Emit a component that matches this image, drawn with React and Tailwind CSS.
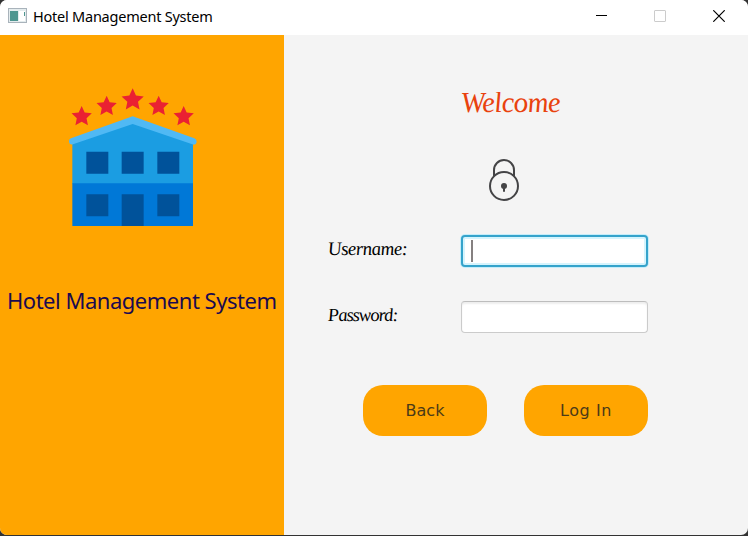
const starPoints = (cx, cy, r) =>
  Array.from({ length: 10 }, (_, i) => {
    const a = -Math.PI / 2 + (i * Math.PI) / 5;
    const d = i % 2 ? r * 0.48 : r;
    return `${(cx + d * Math.cos(a)).toFixed(1)},${(cy + d * Math.sin(a)).toFixed(1)}`;
  }).join(" ");

function HotelLogo() {
  return (
    <svg viewBox="0 0 480 465" className="h-[155px] w-[160px]">
      <path d="M52 185 L233 122 L414 185 V312 H52Z" fill="#1b9de2" />
      <path d="M52 310 H414 V438 H52Z" fill="#0078d7" />
      <path d="M42 184 Q42 177 48 175 L233 109 L418 175 Q425 177 425 185 Q423 196 412 193 L233 132 L54 193 Q43 196 42 184Z" fill="#50b9f4" />
      <path d="M94 215h66v66H94zM200 215h66v66h-66zM307 215h66v66h-66zM94 343h66v66H94zM307 343h66v66h-66zM200 343h66v95h-66z" fill="#00529a" />
      <g fill="#ea2132">
        <polygon points={starPoints(80, 110, 32)} />
        <polygon points={starPoints(155, 79, 32)} />
        <polygon points={starPoints(233, 60, 35)} />
        <polygon points={starPoints(311, 79, 32)} />
        <polygon points={starPoints(386, 110, 32)} />
      </g>
    </svg>
  );
}

function Lock() {
  return (
    <svg viewBox="114 234 96 132" className="ml-[38px] h-[44px] w-[32px]" fill="none" stroke="#444446" strokeWidth="6">
      <path d="M132 289 V270 A30 30 0 0 1 192 270 V289" />
      <circle cx="162" cy="318" r="42" />
      <circle cx="162" cy="318" r="9" fill="#444446" stroke="none" />
      <path d="M162 318 V335" />
    </svg>
  );
}

const script = "font-['Liberation_Serif',serif] italic";

export default function App() {
  return (
    <div className="h-[536px] w-[748px] overflow-hidden bg-[#333] pb-px">
      <div className="flex h-[535px] flex-col overflow-hidden rounded-[7px] bg-[#f4f4f4]">
        <header className="flex h-[35px] shrink-0 items-center bg-white pb-[3px] pl-2">
          <svg viewBox="0 0 19 16" className="h-4 w-[19px]">
            <rect x=".5" y=".5" width="18" height="14" fill="#e4ecee" stroke="#a9b3bb" />
            <rect x="2" y="3" width="8" height="10" fill="#4f9690" />
            <path d="M11 3h6v10h-6z" fill="#fff" />
            <path d="M16.5 4v4" stroke="#4f9690" />
          </svg>
          <h1 className="ml-[6px] whitespace-nowrap font-['Noto_Sans',sans-serif] text-[14.5px] leading-5 tracking-[-0.23px] text-black">
            Hotel Management System
          </h1>
          <div className="mr-[23px] ml-auto flex items-center gap-[47px]">
            <svg viewBox="0 0 12 12" className="h-3 w-3"><path d="M1 5.5h11" stroke="#000" /></svg>
            <svg viewBox="0 0 12 12" className="h-3 w-3"><rect x=".5" y=".5" width="11" height="11" rx=".5" fill="none" stroke="#ccc" /></svg>
            <svg viewBox="0 0 12 12" className="h-3 w-3"><path d="M.3 .3l11.4 11.4M11.7 .3L.3 11.7" stroke="#000" strokeWidth="1.2" /></svg>
          </div>
        </header>
        <div className="flex flex-1">
          <aside className="flex w-[284px] flex-col bg-[#ffa500] pt-[45px]">
            <div className="ml-[55px]"><HotelLogo /></div>
            <p className="mt-[49px] ml-[7px] whitespace-nowrap font-['Noto_Sans',sans-serif] text-[22px] leading-8 tracking-[-0.48px] text-[#1a0a50]">
              Hotel Management System
            </p>
          </aside>
          <main className="flex flex-1 flex-col">
            <h2 className={`${script} mt-[47px] ml-[177px] h-10 w-[110px] skew-x-[5deg] whitespace-nowrap text-[29px] leading-10 tracking-[-0.7px] text-[#e9420e]`}>Welcome</h2>
            <div className="mt-9 ml-[139px] flex h-11 items-center pl-[27px]"><Lock /></div>
            <div className="mt-[33px] ml-[44px] flex items-center">
              <label className={`${script} w-[133px] skew-x-[5deg] pb-1 text-[19px] leading-7 tracking-[-0.55px] text-black`}>Username:</label>
              <div className="flex h-8 w-[187px] items-center rounded-[4px] border-2 border-[#35a3cb] bg-white pl-[8px] shadow-[0_0_0_1px_#c5edfa,inset_0_0_0_2px_#d5f4fd]">
                <span className="h-[22px] w-[1.5px] bg-[#858080]" />
              </div>
            </div>
            <div className="mt-[34px] ml-[44px] flex items-center">
              <label className={`${script} w-[133px] skew-x-[5deg] pb-1 text-[18.5px] leading-7 tracking-[-1px] text-black`}>Password:</label>
              <div className="h-8 w-[187px] rounded-[4px] border border-[#cbcbcb] border-t-[#bdbdbd] bg-white shadow-[inset_0_2px_2px_#eee]" />
            </div>
            <div className="mt-[52px] ml-[79px] flex gap-[37px] font-['DejaVu_Sans',sans-serif] text-[16px] text-[#4b3a18]">
              <button className="h-[51px] w-[124px] rounded-[20px] bg-[#ffa500]">Back</button>
              <button className="h-[51px] w-[124px] rounded-[20px] bg-[#ffa500] tracking-[0.6px]">Log In</button>
            </div>
          </main>
        </div>
      </div>
    </div>
  );
}
